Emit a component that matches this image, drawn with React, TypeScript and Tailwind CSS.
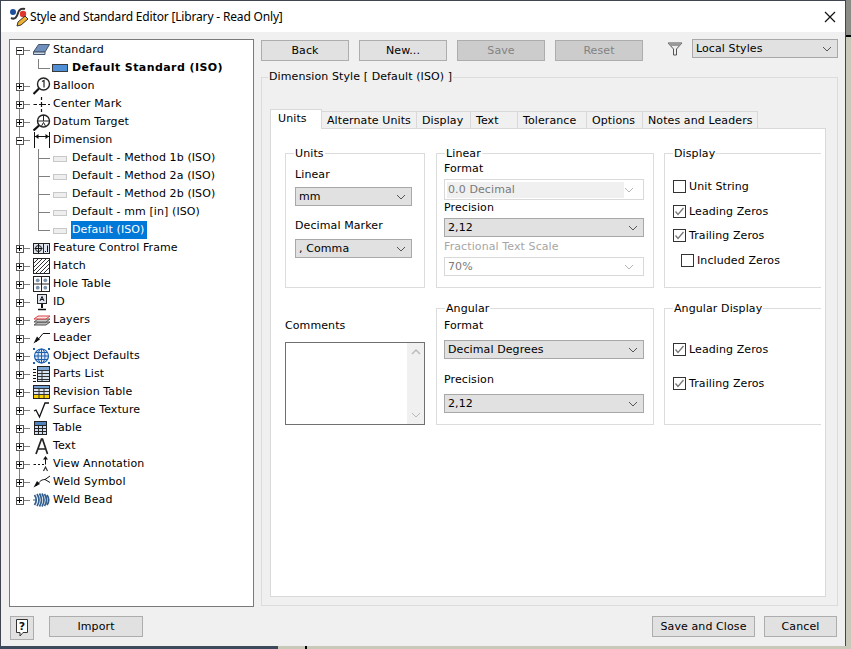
import { ReactNode } from "react";

const FONT = "font-['DejaVu_Sans',sans-serif]";

// tree glyphs, all on a 18px row
const Icons: Record<string, ReactNode> = {
  standard: (
    <>
      <path d="M0.5 11 L5.5 3.5 L16.5 3.5 L12 11 Z" fill="#6f8fbd" stroke="#44546a" />
      <path d="M0.5 11 L12 11 L12 13.5 L0.5 13.5 Z" fill="#cfd8e6" stroke="#44546a" />
    </>
  ),
  balloon: (
    <>
      <circle cx="10.5" cy="7" r="6" fill="#fff" stroke="#222" strokeWidth="1.4" />
      <path d="M9 4.5 L11 3.5 L11 10.5" fill="none" stroke="#222" strokeWidth="1.2" />
      <path d="M0.5 17 L6 11.5" stroke="#111" strokeWidth="2.2" />
    </>
  ),
  center: (
    <path
      d="M0.5 9.5 H4 M6 9.5 H13 M15 9.5 H17 M8.5 2 V5 M8.5 7 V12 M8.5 14 V17"
      stroke="#111"
      strokeWidth="1.2"
      fill="none"
    />
  ),
  datum: (
    <>
      <circle cx="10.5" cy="8" r="6" fill="#fff" stroke="#222" strokeWidth="1.4" />
      <path d="M4.5 8 H16.5 M10.5 2 V8 M8.5 13 L10.5 9.5 L12.5 13" stroke="#222" fill="none" />
      <path d="M0.5 17.5 L6 12.5" stroke="#111" strokeWidth="2.2" />
    </>
  ),
  dimension: (
    <>
      <path d="M1.5 1 V17 M16.5 1 V17" stroke="#111" />
      <path d="M2 5.5 H16" stroke="#111" />
      <path d="M2 5.5 L5.5 3 V8 Z M16 5.5 L12.5 3 V8 Z" fill="#111" />
    </>
  ),
  feature: (
    <>
      <rect x="0.5" y="4.5" width="16" height="10" fill="#dfe6f0" stroke="#222" />
      <path d="M10.5 4.5 V14.5" stroke="#222" />
      <circle cx="5.5" cy="9.5" r="3" fill="none" stroke="#111" />
      <path d="M1.5 9.5 H9.5 M5.5 5 V14" stroke="#111" />
      <path d="M12 12.5 H13 M14.5 6.5 V13" stroke="#111" />
    </>
  ),
  hatch: (
    <>
      <rect x="0.5" y="1.5" width="16" height="15" fill="#fff" stroke="#222" />
      <path d="M1 6 L5 2 M1 10 L9 2 M1 14 L13 2 M3 16 L16 3 M7 16 L16 7 M11 16 L16 11" stroke="#333" />
    </>
  ),
  hole: (
    <>
      <rect x="0.5" y="1.5" width="16" height="15" fill="#fff" stroke="#222" />
      <path d="M8.5 2 V16 M1 9 H16" stroke="#222" />
      <circle cx="4.7" cy="5.3" r="1.9" fill="#7d93ad" />
      <circle cx="12.3" cy="5.3" r="1.9" fill="#7d93ad" />
      <circle cx="4.7" cy="12.7" r="1.9" fill="#7d93ad" />
      <circle cx="12.3" cy="12.7" r="1.9" fill="#7d93ad" />
    </>
  ),
  id: (
    <>
      <rect x="4.5" y="1.5" width="9" height="9" fill="#dfe6f0" stroke="#222" />
      <path d="M7 8 L9 3.5 L11 8 M7.8 6.5 H10.2" stroke="#111" fill="none" />
      <path d="M9 11 V15" stroke="#111" strokeWidth="2" />
      <path d="M5 16.5 H13" stroke="#111" strokeWidth="1.5" />
    </>
  ),
  layers: (
    <>
      <path d="M1 14 L5 11 H17 L13 14 Z" fill="#bbb" stroke="#555" />
      <path d="M1 11 L5 8 H17 L13 11 Z" fill="#ccc" stroke="#555" />
      <path d="M1 8 L5 5 H17 L13 8 Z" fill="#fbe4e4" stroke="#d94040" />
    </>
  ),
  leader: (
    <>
      <path d="M3 13 L10 4.5 H17" fill="none" stroke="#111" />
      <path d="M0.5 14.5 L7 10.5 L4 7.5 Z" fill="#111" />
    </>
  ),
  object: (
    <>
      <circle cx="8.5" cy="9" r="7" fill="#dbe7f6" stroke="#1b5fae" strokeWidth="1.2" />
      <path d="M2 9 H15 M8.5 2 V16 M3 5.5 H14 M3 12.5 H14" stroke="#1b5fae" />
      <ellipse cx="8.5" cy="9" rx="3.5" ry="7" fill="none" stroke="#1b5fae" />
      <path d="M0 1 H2 V3 H0 Z M15 1 H17 V3 H15 Z M0 15 H2 V17 H0 Z M15 15 H17 V17 H15 Z" fill="#1b5fae" />
    </>
  ),
  parts: (
    <>
      <rect x="4.5" y="1.5" width="12" height="15" fill="#d5e2f0" stroke="#222" />
      <rect x="5" y="2" width="11" height="3" fill="#7ba6d4" />
      <path d="M5 5.5 H16 M5 8.5 H16 M5 11.5 H16 M5 14.5 H16 M9 5 V16" stroke="#333" />
      <path d="M0 4.5 H3 M0 7.5 H3 M0 10.5 H3 M0 13.5 H3 M0 16.5 H3" stroke="#111" />
    </>
  ),
  revision: (
    <>
      <rect x="0.5" y="2.5" width="16" height="13" fill="#dbe6f2" stroke="#222" />
      <rect x="1" y="3" width="15" height="2" fill="#6f9fd0" />
      <rect x="1" y="12" width="15" height="3" fill="#f8d000" />
      <path d="M1 5.5 H16 M1 8.5 H16 M1 11.5 H16 M6 5 V15 M11 5 V15" stroke="#333" />
    </>
  ),
  surface: <path d="M1 10 L3 9 L6.5 16 L12 2 H16" fill="none" stroke="#111" strokeWidth="1.3" />,
  table: (
    <>
      <rect x="1.5" y="2.5" width="12" height="13" fill="#cfe0f2" stroke="#222" />
      <rect x="2" y="3" width="11" height="3" fill="#4f81bd" />
      <path d="M2 6.5 H13 M2 9.5 H13 M2 12.5 H13 M5.5 6 V15 M9.5 6 V15" stroke="#222" />
    </>
  ),
  text: <path d="M3 17 L8.5 2 H9.5 L14.5 17 M5 12 H12.5" fill="none" stroke="#222" strokeWidth="1.7" />,
  view: (
    <>
      <path d="M0.5 9.5 H3 M5 9.5 H7 M9 9.5 H11" stroke="#111" />
      <path d="M12.5 9.5 V3" stroke="#111" />
      <path d="M12.5 1 L15 4.5 H10 Z" fill="#111" />
      <path d="M10.5 16 L12.5 12 L14.5 16" fill="none" stroke="#333" strokeWidth="1.2" />
    </>
  ),
  weldSymbol: (
    <>
      <path d="M3 13 C6 10 7 6.5 12 6.5 L17 3 M12 6.5 L17 9.5" fill="none" stroke="#111" />
      <path d="M0.5 14.5 L7 11 L4 8 Z" fill="#111" />
    </>
  ),
  weldBead: (
    <>
      <path d="M0 9 H3" stroke="#2f5d8f" />
      <path
        d="M1.5 4 Q5 9 1.5 14 M4 3 Q8 9 4 15 M6.5 2.5 Q10.5 9 6.5 15.5 M9 2.5 Q13 9 9 15.5 M11.5 3 Q15.5 9 11.5 15 M14 4 Q17.5 9 14 14"
        fill="none"
        stroke="#2f5d8f"
        strokeWidth="1.7"
      />
    </>
  ),
};

function TreeGutter({ open, first, last }: { open: boolean; first?: boolean; last?: boolean }) {
  const top = first ? 9 : 0;
  const bottom = last ? 9 : 18;
  return (
    <svg width="22" height="18" className="shrink-0" shapeRendering="crispEdges">
      <rect x="9" y={top} width="1" height={bottom - top} fill="#808080" />
      <rect x="14" y="9" width="6" height="1" fill="#808080" />
      <rect x="6" y="6" width="8" height="8" fill="#555" />
      <rect x="7" y="7" width="6" height="6" fill="#fff" />
      <rect x="7" y="9" width="5" height="1" fill="#000" />
      {!open && <rect x="9" y="7" width="1" height="5" fill="#000" />}
    </svg>
  );
}

function ChildGutter({ end }: { end?: boolean }) {
  return (
    <svg width="43" height="18" className="shrink-0" shapeRendering="crispEdges">
      <rect x="9" y="0" width="1" height="18" fill="#808080" />
      <rect x="28" y="0" width="1" height={end ? 10 : 18} fill="#808080" />
      <rect x="28" y="9" width="12" height="1" fill="#808080" />
    </svg>
  );
}

function TreeRow({ icon, label, open, first, last }: { icon: string; label: string; open?: boolean; first?: boolean; last?: boolean }) {
  return (
    <div className="flex h-[18px] items-center">
      <TreeGutter open={!!open} first={first} last={last} />
      <svg width="18" height="18" viewBox="0 0 18 18" className="ml-px shrink-0">
        {Icons[icon]}
      </svg>
      <span className="ml-[2px]">{label}</span>
    </div>
  );
}

function ChildRow({ label, end, bold, selected }: { label: string; end?: boolean; bold?: boolean; selected?: boolean }) {
  return (
    <div className="flex h-[18px] items-center">
      <ChildGutter end={end} />
      {bold ? (
        <span className="-ml-px h-[8px] w-[16px] shrink-0 border border-[#3a3a3a] bg-[#4f8fd6]" />
      ) : (
        <span className="mt-px h-[6px] w-[14px] shrink-0 border border-[#c8c8c8] bg-[#eeeeee]" />
      )}
      {bold ? (
        <span className="ml-[4px] font-bold tracking-[0.42px]">{label}</span>
      ) : selected ? (
        <span className="ml-[4px] flex h-[18px] w-[76px] items-center bg-[#0078d7] pb-px pl-px text-white">{label}</span>
      ) : (
        <span className="ml-[4px] pl-px">{label}</span>
      )}
    </div>
  );
}

function Button({ label, width, disabled }: { label: string; width: string; disabled?: boolean }) {
  return (
    <button
      className={
        width +
        " h-[21px] border border-[#adadad] " +
        (disabled ? "bg-[#cccccc] text-[#838383]" : "bg-[#e1e1e1] text-black")
      }
    >
      {label}
    </button>
  );
}

function Chevron({ color = "#555" }: { color?: string }) {
  return (
    <svg width="10" height="6" viewBox="0 0 10 6" className="shrink-0">
      <path d="M1 1 L5 5 L9 1" fill="none" stroke={color} />
    </svg>
  );
}

function Select({ value, disabled, inner }: { value: string; disabled?: boolean; inner?: boolean }) {
  if (disabled) {
    return (
      <div className={"flex items-center justify-between border border-[#d9d9d9] bg-white pr-[9px] text-[#7a7a7a] " + (inner ? "h-[21px] pl-[2px]" : "h-[19px] pl-[3px]")}>
        {inner ? (
          <span className="flex h-[16px] w-[177px] items-center bg-[#f0f0f0] pl-px">{value}</span>
        ) : (
          <span>{value}</span>
        )}
        <Chevron color="#b5b5b5" />
      </div>
    );
  }
  return (
    <div className="flex h-[19px] items-center justify-between border border-[#a8a8a8] bg-[#e1e1e1] pl-[3px] pr-[5px]">
      <span>{value}</span>
      <Chevron />
    </div>
  );
}

function Check({ label, checked }: { label: string; checked?: boolean }) {
  return (
    <div className="flex h-[13px] items-center gap-[3px]">
      <span className="flex size-[13px] shrink-0 items-center justify-center border border-[#333] bg-white">
        {checked && (
          <svg width="11" height="11" viewBox="0 0 11 11">
            <path d="M1.5 5.5 L4 8.5 L9.5 2" fill="none" stroke="#777" strokeWidth="1.3" />
          </svg>
        )}
      </span>
      <span>{label}</span>
    </div>
  );
}

function Group({ title, className, pad, children }: { title: string; className: string; pad: string; children: ReactNode }) {
  return (
    <fieldset className={"border border-[#dcdcdc] " + className}>
      <legend className="ml-[8px] px-px leading-[13px]">{title}</legend>
      <div className={pad}>{children}</div>
    </fieldset>
  );
}

function Tab({ label, width }: { label: string; width: string }) {
  return (
    <div className={width + " flex h-[17px] items-center border border-b-0 border-l-0 border-[#d9d9d9] bg-[#f0f0f0] pl-[5px] pt-[2px]"}>
      {label}
    </div>
  );
}

export default function App() {
  return (
    <div className={FONT + " flex h-[649px] w-[851px] flex-col overflow-hidden bg-[#c9c9ba] text-[11px] leading-[14px] tracking-[0.1px] text-black"}>
      <div className="flex h-[646px] shrink-0">
        <div className="flex w-[846px] shrink-0 flex-col border-x border-t border-[#3f4650] bg-[#f0f0f0]">
          {/* Title bar */}
          <div className="flex h-[31px] shrink-0 items-center bg-white pl-[8px] pr-[9px]">
            <svg width="22" height="22" viewBox="0 0 22 22" className="shrink-0">
              <circle cx="4" cy="6" r="3" fill="#1f4e9c" />
              <circle cx="14" cy="8" r="3.2" fill="#e0352b" />
              <path d="M2 12 C6 14 8 11 9 7 C10 3 13 2 16 3" fill="none" stroke="#333" strokeWidth="2" />
              <path d="M8 20 L9 16 L16 10 L19 13 L12 19 Z" fill="#f0b030" stroke="#333" />
            </svg>
            <span className="-ml-px font-['Noto_Sans',sans-serif] text-[12px] tracking-[-0.17px]">Style and Standard Editor [Library - Read Only]</span>
            <svg width="12" height="12" viewBox="0 0 12 12" className="ml-auto">
              <path d="M1 1 L11 11 M11 1 L1 11" stroke="#111" strokeWidth="1.2" />
            </svg>
          </div>

          {/* Main */}
          <div className="flex h-[575px] shrink-0 gap-[7px] pl-[8px] pr-[7px] pt-[7px]">
            {/* Tree */}
            <div className="h-[568px] w-[245px] shrink-0 border border-[#7a7a7a] bg-white">
              <div className="pt-px">
                <TreeRow icon="standard" label="Standard" open first />
                <ChildRow label="Default Standard (ISO)" end bold />
                <TreeRow icon="balloon" label="Balloon" />
                <TreeRow icon="center" label="Center Mark" />
                <TreeRow icon="datum" label="Datum Target" />
                <TreeRow icon="dimension" label="Dimension" open />
                <ChildRow label="Default - Method 1b (ISO)" />
                <ChildRow label="Default - Method 2a (ISO)" />
                <ChildRow label="Default - Method 2b (ISO)" />
                <ChildRow label="Default - mm [in] (ISO)" />
                <ChildRow label="Default (ISO)" end selected />
                <TreeRow icon="feature" label="Feature Control Frame" />
                <TreeRow icon="hatch" label="Hatch" />
                <TreeRow icon="hole" label="Hole Table" />
                <TreeRow icon="id" label="ID" />
                <TreeRow icon="layers" label="Layers" />
                <TreeRow icon="leader" label="Leader" />
                <TreeRow icon="object" label="Object Defaults" />
                <TreeRow icon="parts" label="Parts List" />
                <TreeRow icon="revision" label="Revision Table" />
                <TreeRow icon="surface" label="Surface Texture" />
                <TreeRow icon="table" label="Table" />
                <TreeRow icon="text" label="Text" />
                <TreeRow icon="view" label="View Annotation" />
                <TreeRow icon="weldSymbol" label="Weld Symbol" />
                <TreeRow icon="weldBead" label="Weld Bead" last />
              </div>
            </div>

            {/* Right column */}
            <div className="flex min-w-0 flex-1 flex-col">
              <div className="flex h-[31px] shrink-0 items-start">
                <div className="mt-px flex gap-[10px]">
                  <Button label="Back" width="w-[88px]" />
                  <Button label="New..." width="w-[88px]" />
                  <Button label="Save" width="w-[88px]" disabled />
                  <Button label="Reset" width="w-[88px]" disabled />
                </div>
                <svg width="16" height="14" viewBox="0 0 16 14" className="ml-[24px] mt-[3px] shrink-0">
                  <path d="M1 1 H15 L9.5 7 V13 H6.5 V7 Z" fill="#eee" stroke="#555" />
                  <path d="M1 1 H15 L12 4 H4 Z" fill="#9a9a9a" />
                </svg>
                <div className="ml-[9px] flex-1">
                  <Select value="Local Styles" />
                </div>
              </div>

              <fieldset className="h-[536px] border border-[#dcdcdc]">
                <legend className="ml-[6px] px-px leading-[14px]">Dimension Style [ Default (ISO) ]</legend>
                <div className="pl-[8px] pr-[11px]">
                  {/* Tabs */}
                  <div className="mt-[25px] flex h-[19px] items-end">
                    <div className="relative z-10 -mb-px flex h-[20px] w-[52px] items-start border border-b-0 border-[#d9d9d9] bg-white pl-[7px] pt-[2px]">Units</div>
                    <Tab label="Alternate Units" width="w-[95px]" />
                    <Tab label="Display" width="w-[54px]" />
                    <Tab label="Text" width="w-[47px]" />
                    <Tab label="Tolerance" width="w-[69px]" />
                    <Tab label="Options" width="w-[56px]" />
                    <Tab label="Notes and Leaders" width="w-[115px]" />
                  </div>
                  <div className="h-[469px] overflow-hidden border border-[#d9d9d9] bg-white pl-[14px] pt-[18px]">
                    <div className="grid w-[536px] grid-cols-[140px_218px_157px] gap-x-[11px]">
                      <Group title="Units" className="h-[141px]" pad="pl-[9px] pr-[12px]">
                        <p className="mt-[8px]">Linear</p>
                        <div className="mt-[5px]"><Select value="mm" /></div>
                        <p className="mt-[13px]">Decimal Marker</p>
                        <div className="mt-[6px]"><Select value=", Comma" /></div>
                      </Group>
                      <Group title="Linear" className="h-[141px]" pad="pl-[7px] pr-[9px]">
                        <p className="mt-[2px]">Format</p>
                        <div className="mt-[3px]"><Select value="0.0 Decimal" disabled inner /></div>
                        <p className="mt-px">Precision</p>
                        <div className="mt-[3px]"><Select value="2,12" /></div>
                        <p className="mt-[3px] text-[#a6a6a6]">Fractional Text Scale</p>
                        <div className="mt-[3px]"><Select value="70%" disabled /></div>
                      </Group>
                      <Group title="Display" className="-ml-px h-[141px] w-[157px] border-r-0" pad="pl-[8px]">
                        <div className="mt-[20px] flex flex-col gap-[12px]">
                          <Check label="Unit String" />
                          <Check label="Leading Zeros" checked />
                          <div className="-mt-px"><Check label="Trailing Zeros" checked /></div>
                          <div className="pl-[8px]"><Check label="Included Zeros" /></div>
                        </div>
                      </Group>

                      <div className="mt-[14px] h-[123px] pt-[17px]">
                        <p className="leading-[14px]">Comments</p>
                        <div className="mt-[9px] flex h-[83px] justify-end border border-[#707070] bg-white">
                          <div className="flex w-[17px] flex-col items-center justify-between bg-[#f0f0f0] py-[6px]">
                            <svg width="10" height="6" viewBox="0 0 10 6"><path d="M1 5 L5 1 L9 5" fill="none" stroke="#b8b8b8" strokeWidth="1.4" /></svg>
                            <Chevron color="#b8b8b8" />
                          </div>
                        </div>
                      </div>
                      <Group title="Angular" className="mt-[14px] h-[123px]" pad="pl-[7px] pr-[9px]">
                        <p className="mt-[4px]">Format</p>
                        <div className="mt-[7px]"><Select value="Decimal Degrees" /></div>
                        <p className="mt-[14px]">Precision</p>
                        <div className="mt-[7px]"><Select value="2,12" /></div>
                      </Group>
                      <Group title="Angular Display" className="-ml-px mt-[14px] h-[123px] w-[157px] border-r-0" pad="pl-[8px]">
                        <div className="mt-[28px] flex flex-col gap-[21px]">
                          <Check label="Leading Zeros" checked />
                          <Check label="Trailing Zeros" checked />
                        </div>
                      </Group>
                    </div>
                  </div>
                </div>
              </fieldset>
            </div>
          </div>

          {/* Footer */}
          <div className="flex flex-1 items-start pl-[9px] pr-[8px] pt-[9px]">
            <button className="flex h-[24px] w-[24px] items-center justify-center border border-[#adadad] bg-[#e1e1e1]">
              <svg width="14" height="20" viewBox="0 0 14 20">
                <path d="M1.5 1.5 H12.5 V14.5 H8 L5 18 V14.5 H1.5 Z" fill="#fff" stroke="#333" />
                <text x="7" y="12" textAnchor="middle" fontSize="11" fontWeight="700" fill="#111">?</text>
              </svg>
            </button>
            <Button label="Import" width="ml-[15px] w-[94px]" />
            <Button label="Save and Close" width="ml-auto w-[103px]" />
            <Button label="Cancel" width="ml-[9px] w-[73px]" />
          </div>
        </div>
        {/* Desktop behind the window */}
        <div className="flex flex-1 flex-col">
          <div className="h-[35px] bg-[#8c8c86]" />
          <div className="h-[2px] bg-black" />
        </div>
      </div>
      <div className="flex flex-1">
        <div className="w-[278px] bg-[#3c4a5c]" />
        <div className="ml-[27px] w-[2px] bg-black" />
      </div>
    </div>
  );
}
